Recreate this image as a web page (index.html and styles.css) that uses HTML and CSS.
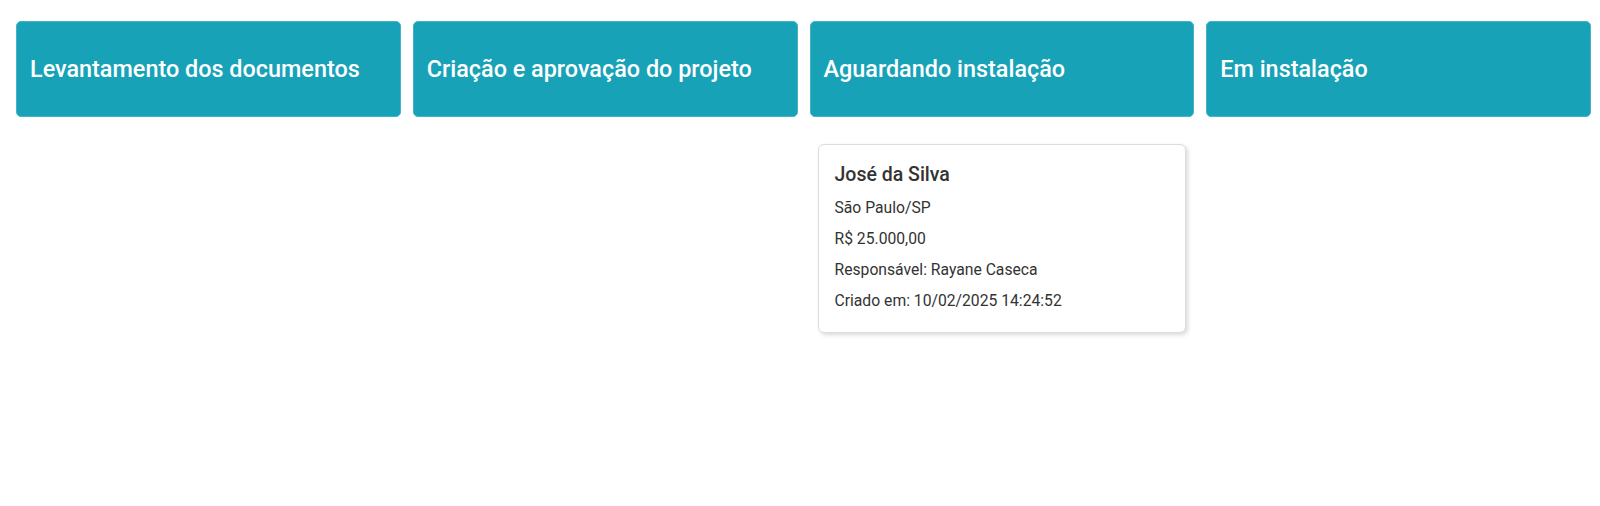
FILE: index.html
```html
<!DOCTYPE html>
<html lang="pt-BR">
<head>
    <meta charset="UTF-8">
    <meta name="viewport" content="width=device-width, initial-scale=1.0">
    <title>Kanban de Projetos</title>
    <link rel="stylesheet" href="styles.css">
</head>
<body>
    <div class="board">
        <div class="column">
            <div class="column-header">
                <h2>Levantamento dos documentos</h2>
            </div>
            <div class="column-body"></div>
        </div>

        <div class="column">
            <div class="column-header">
                <h2>Criação e aprovação do projeto</h2>
            </div>
            <div class="column-body"></div>
        </div>

        <div class="column">
            <div class="column-header">
                <h2>Aguardando instalação</h2>
            </div>
            <div class="column-body">
                <div class="card">
                    <h3>José da Silva</h3>
                    <p>São Paulo/SP</p>
                    <p>R$ 25.000,00</p>
                    <p>Responsável: Rayane Caseca</p>
                    <p>Criado em: 10/02/2025 14:24:52</p>
                </div>
            </div>
        </div>

        <div class="column">
            <div class="column-header">
                <h2>Em instalação</h2>
            </div>
            <div class="column-body"></div>
        </div>
    </div>
</body>
</html>
```

FILE: styles.css
```css
body {
    font-family: Roboto, Arial, sans-serif;
    margin: 0;
    padding: 0;
    background-color: #fff;
    color: #333;
}

.board {
    display: flex;
    gap: 12px;
    padding: 21px 9px 0 16px;
}

.column {
    flex: 1;
    min-width: 0;
}

.column-header {
    background-color: #17a2b8;
    border: 1px solid #42b4c6;
    border-radius: 5px;
    height: 96px;
    box-sizing: border-box;
    padding: 0 13px;
    display: flex;
    align-items: center;
}

.column-header h2 {
    margin: 0;
    color: #fff;
    font-size: 23.4px;
    font-weight: 500;
    line-height: 28px;
}

.column-body {
    padding: 27px 8px;
}

.card {
    background-color: #fff;
    border: 1px solid #ddd;
    border-radius: 6px;
    box-shadow: 2px 2px 4px rgba(0, 0, 0, 0.15);
    padding: 18px 16px 21px;
}

.card h3 {
    margin: 0 0 11px;
    font-size: 19.5px;
    font-weight: 500;
    line-height: 23px;
    color: #333;
}

.card p {
    margin: 10px 0 0;
    font-size: 15.7px;
    line-height: 21px;
    color: #333;
}
```
